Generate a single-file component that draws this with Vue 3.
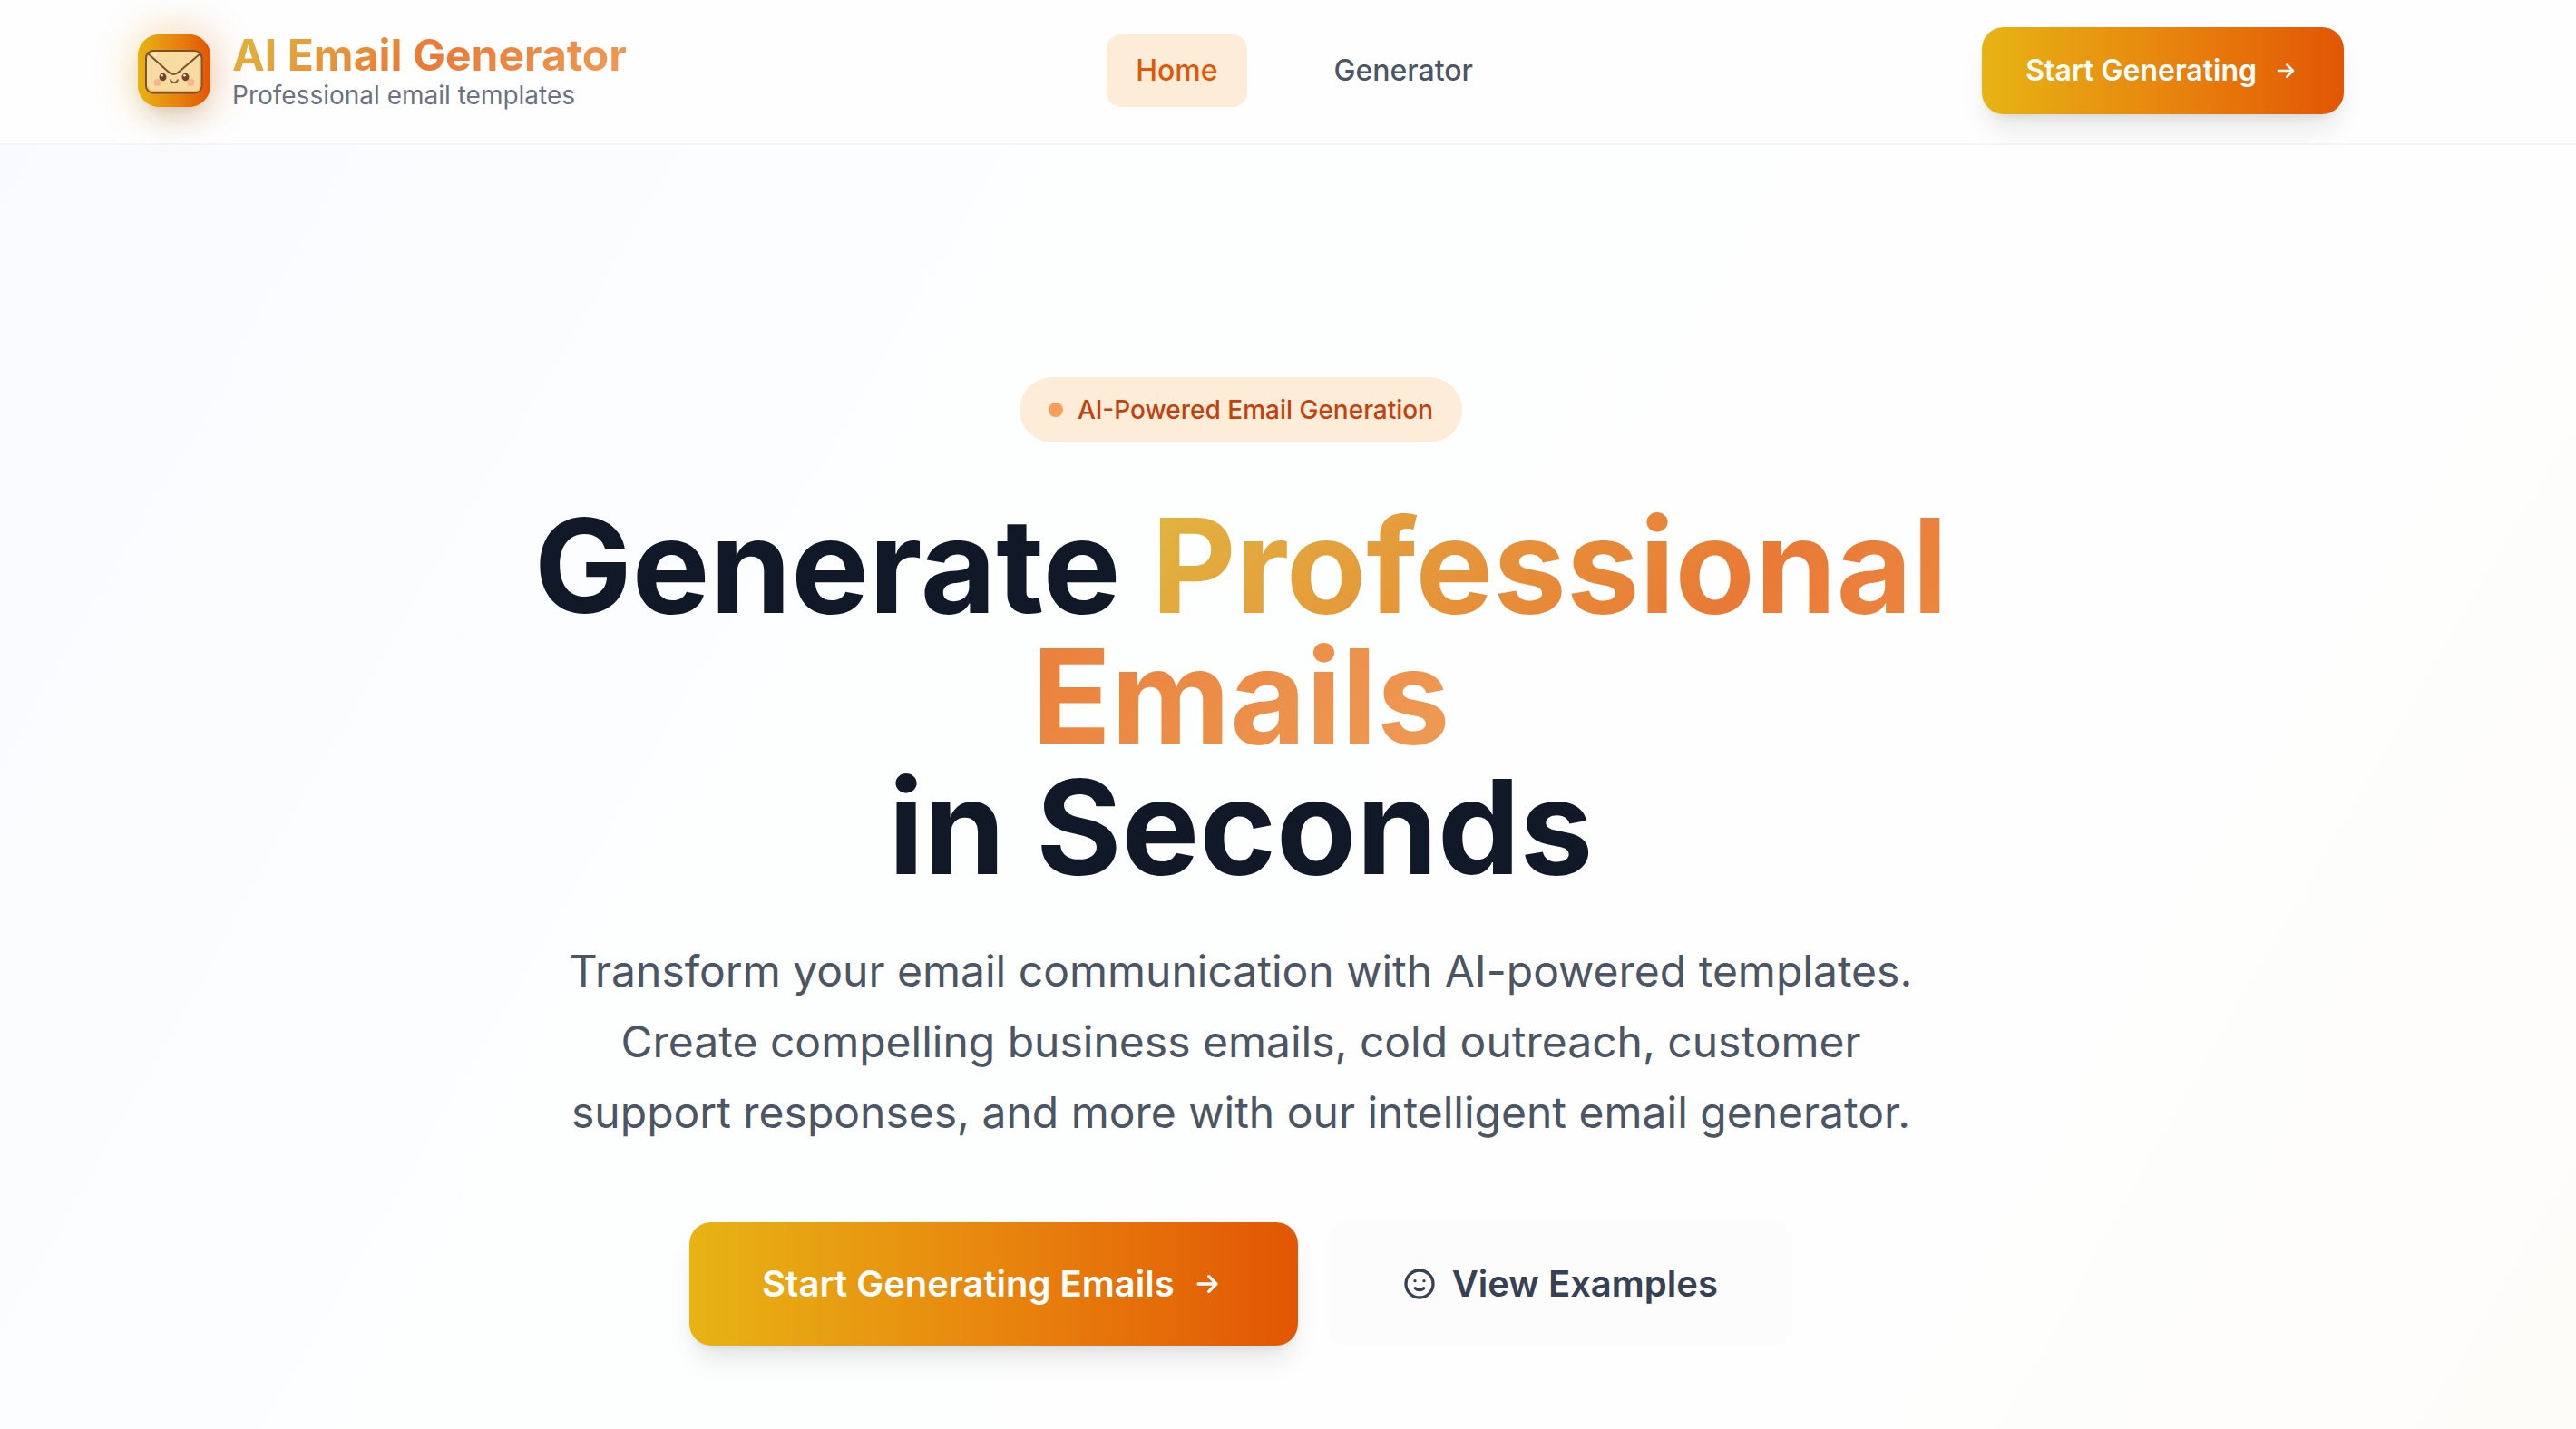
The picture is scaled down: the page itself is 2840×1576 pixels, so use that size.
<script setup>
const navLinks = [
  { label: 'Home', href: '#home', active: true },
  { label: 'Generator', href: '#generator', active: false },
]
</script>

<template>
  <div class="page">
    <header class="header">
      <div class="header-inner">
        <a class="brand" href="#home">
          <span class="brand-icon">
            <svg viewBox="0 0 64 64" aria-hidden="true">
              <rect x="1" y="10" width="61.5" height="46.5" rx="8" fill="#f7dba0" stroke="#7e5030" stroke-width="2" />
              <path d="M3 50 Q4 54.500 9 54.500 H55 Q60.500 54.500 60.500 49 V20" fill="none" stroke="#e8b878" stroke-width="1.500" />
              <path d="M3 13 L26 33.500 Q31.500 38.500 37 33.500 L61 13" fill="none" stroke="#7e5030" stroke-width="2" stroke-linecap="round" />
              <circle cx="11" cy="14.500" r="1.500" fill="#fdf2d8" />
              <circle cx="13.500" cy="45" r="4" fill="#f6b78c" />
              <circle cx="50.500" cy="45" r="4" fill="#f6b78c" />
              <ellipse cx="19.500" cy="39" rx="4" ry="4.300" fill="#744526" />
              <ellipse cx="44.500" cy="39" rx="4" ry="4.300" fill="#744526" />
              <circle cx="18.500" cy="37.300" r="1.200" fill="#fff" />
              <circle cx="43.500" cy="37.300" r="1.200" fill="#fff" />
              <path d="M28 42 Q28.500 45 32 45 Q35.500 45 36 42" fill="none" stroke="#7e5030" stroke-width="1.600" stroke-linecap="round" />
            </svg>
          </span>
          <span class="brand-text">
            <span class="brand-name gradient-text">AI Email Generator</span>
            <span class="brand-tagline">Professional email templates</span>
          </span>
        </a>

        <nav class="nav" aria-label="Main">
          <a
            v-for="link in navLinks"
            :key="link.label"
            :href="link.href"
            class="nav-link"
            :class="{ active: link.active }"
          >{{ link.label }}</a>
        </nav>

        <button type="button" class="btn btn-primary btn-small">
          <span>Start Generating</span>
          <svg class="icon" viewBox="0 0 24 24" aria-hidden="true"><path d="M13 7l5 5m0 0l-5 5m5-5H6" /></svg>
        </button>
      </div>
    </header>

    <main class="hero">
      <div class="badge"><span class="dot"></span><span>AI-Powered Email Generation</span></div>
      <h1 class="title">
        Generate <span class="gradient-text">Professional Emails</span><br />in Seconds
      </h1>
      <p class="lead">
        Transform your email communication with AI-powered templates. Create compelling business
        emails, cold outreach, customer support responses, and more with our intelligent email
        generator.
      </p>
      <div class="actions">
        <button type="button" class="btn btn-primary btn-large">
          <span>Start Generating Emails</span>
          <svg class="icon" viewBox="0 0 24 24" aria-hidden="true"><path d="M13 7l5 5m0 0l-5 5m5-5H6" /></svg>
        </button>
        <button type="button" class="btn btn-large btn-ghost">
          <svg class="icon" viewBox="0 0 24 24" aria-hidden="true">
            <path d="M14.828 14.828a4 4 0 01-5.656 0M9 10h.01M15 10h.01M21 12a9 9 0 11-18 0 9 9 0 0118 0z" />
          </svg>
          <span>View Examples</span>
        </button>
      </div>
    </main>
  </div>
</template>

<style>
body {
  margin: 0;
}
</style>

<style scoped>
.page {
  min-height: 100vh;
  box-sizing: border-box;
  font-family: Inter, "Liberation Sans", sans-serif;
  background: linear-gradient(120deg, #f9fafe 0%, #fdfefe 38%, #fefefe 75%, #fdfcf9 100%);
}

.header {
  padding-right: 104px;
  background: #fefefe;
  border-bottom: 2px solid #f3f4f5;
}

.header-inner {
  box-sizing: border-box;
  max-width: 2560px;
  margin: 0 auto;
  padding: 30px 64px 32px;
  display: flex;
  align-items: center;
  justify-content: space-between;
}

.brand {
  display: flex;
  align-items: center;
  gap: 24px;
  text-decoration: none;
}

.brand-icon {
  position: relative;
  display: flex;
  align-items: center;
  justify-content: center;
  width: 80px;
  height: 80px;
  border-radius: 24px;
  background: linear-gradient(90deg, #e7b414, #e8860e 50%, #e25604);
  box-shadow: 0 20px 30px -6px rgba(0, 0, 0, 0.1), 0 8px 12px -8px rgba(0, 0, 0, 0.1);
}

.brand-icon::before {
  content: "";
  position: absolute;
  inset: 0;
  border-radius: 24px;
  background: linear-gradient(90deg, #e7b414, #e25604);
  filter: blur(24px);
  opacity: 0.4;
}

.brand-icon::after {
  content: "";
  position: absolute;
  inset: 0;
  border-radius: 24px;
  background: linear-gradient(90deg, #e7b414, #e8860e 50%, #e25604);
}

.brand-icon svg {
  position: relative;
  z-index: 1;
  width: 64px;
  height: 64px;
}

.brand-text {
  display: flex;
  flex-direction: column;
  padding-top: 6px;
}

.gradient-text {
  background: linear-gradient(135deg, #e1b63f 0%, #e97a35 50%, #ee9c56 100%);
  background-clip: text;
  -webkit-background-clip: text;
  color: transparent;
}

.brand-name {
  font-size: 48px;
  line-height: 48px;
  font-weight: 700;
}

.brand-tagline {
  font-size: 28px;
  line-height: 40px;
  color: #6b7280;
}

.nav {
  display: flex;
  gap: 64px;
}

.nav-link {
  padding: 16px 32px;
  border-radius: 16px;
  font-size: 32px;
  line-height: 48px;
  font-weight: 500;
  color: #4b5563;
  text-decoration: none;
}

.nav-link.active {
  background: #fdedd8;
  color: #e25605;
}

.btn {
  display: inline-flex;
  align-items: center;
  justify-content: center;
  gap: 16px;
  border: 0;
  border-radius: 24px;
  font-family: inherit;
  font-weight: 600;
  cursor: pointer;
}

.btn-primary {
  color: #fff;
  background: linear-gradient(90deg, #e7b414, #e8860e 50%, #e25604);
  box-shadow: 0 20px 30px -6px rgba(0, 0, 0, 0.1), 0 8px 12px -8px rgba(0, 0, 0, 0.1);
}

.btn-small {
  padding: 24px 48px;
  font-size: 32px;
  line-height: 48px;
}

.btn-large {
  padding: 40px 80px;
  font-size: 40px;
  line-height: 56px;
}

.btn-ghost {
  border: 2px solid #fdfdfd;
  color: #374151;
  background: #fcfcfd;
}

.icon {
  width: 32px;
  height: 32px;
  fill: none;
  stroke: currentColor;
  stroke-width: 2;
  stroke-linecap: round;
  stroke-linejoin: round;
}

.btn-large .icon {
  width: 40px;
  height: 40px;
}

.hero {
  display: flex;
  flex-direction: column;
  align-items: center;
  padding: 256px 104px 88px 0;
  text-align: center;
}

.badge {
  display: flex;
  align-items: center;
  gap: 16px;
  padding: 16px 32px;
  border-radius: 36px;
  background: #fdedd8;
  color: #c2410c;
  font-size: 28px;
  line-height: 40px;
  font-weight: 500;
}

.dot {
  width: 16px;
  height: 16px;
  border-radius: 50%;
  background: #f79e5a;
}

.title {
  max-width: 1792px;
  margin: 64px 0 48px;
  font-size: 144px;
  line-height: 144px;
  font-weight: 700;
  color: #111827;
}

.lead {
  max-width: 1536px;
  margin: 0 0 80px;
  font-size: 48px;
  line-height: 78px;
  color: #4b5563;
}

.actions {
  display: flex;
  align-items: center;
  gap: 32px;
}
</style>
